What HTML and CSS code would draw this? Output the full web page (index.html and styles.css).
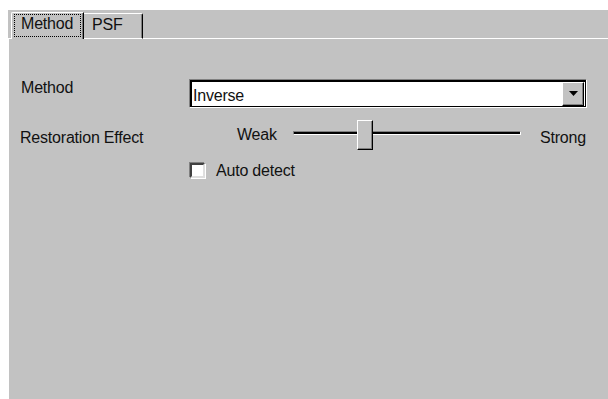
FILE: index.html
```html
<!DOCTYPE html>
<html>
<head>
<meta charset="utf-8">
<link rel="stylesheet" href="styles.css">
</head>
<body>
<div class="window">
  <div class="tabs">
    <div class="tab-lead"></div>
    <div class="tab tab-active"><span class="focus">Method</span></div>
    <div class="tab tab-idle">PSF</div>
    <div class="tab-fill"></div>
  </div>
  <div class="panel">
    <div class="form">
      <div class="label label-method">Method</div>
      <div class="combo">
        <div class="combo-inner">
          <span class="combo-text">Inverse</span>
          <span class="combo-btn">
            <svg width="9" height="5" viewBox="0 0 9 5"><polygon points="0,0 9,0 4.5,5" fill="#000"/></svg>
          </span>
        </div>
      </div>

      <div class="label label-effect">Restoration Effect</div>
      <div class="slider">
        <span class="slider-weak">Weak</span>
        <div class="track">
          <div class="thumb"></div>
        </div>
        <span class="slider-strong">Strong</span>
      </div>

      <div class="spacer"></div>
      <label class="check">
        <span class="check-box"></span>
        <span class="check-text">Auto detect</span>
      </label>
    </div>
  </div>
</div>
</body>
</html>
```

FILE: styles.css
```css
html, body {
  margin: 0;
  padding: 0;
  background: #ffffff;
  overflow: hidden;
}
body {
  font-family: "Liberation Sans", Arial, sans-serif;
  font-size: 16px;
  letter-spacing: -0.2px;
  line-height: 17px;
  color: #111;
}
.window {
  margin: 10px 0 0 8px;
  height: 389px;
  background: #c2c2c2;
  display: flex;
  flex-direction: column;
}
.tabs {
  display: flex;
  align-items: flex-end;
  height: 29px;
}
.tab-lead {
  width: 3px;
  height: 0;
  border-bottom: 1px solid #ffffff;
}
.tab {
  box-sizing: border-box;
}
.tab-active {
  width: 73px;
  height: 27px;
  border-left: 1px solid #ffffff;
  border-top: 1px solid #ffffff;
  border-right: 1px solid #000000;
  box-shadow: inset -1px 0 0 #808080;
  border-top-left-radius: 2px;
  padding: 1px 0 0 2px;
}
.focus {
  display: block;
  box-sizing: border-box;
  width: 67px;
  height: 23px;
  border: 1px dotted #000;
  padding-left: 6px;
}
.tab-idle {
  width: 59px;
  height: 26px;
  border-top: 1px solid #ffffff;
  border-right: 1px solid #000000;
  border-bottom: 1px solid #ffffff;
  box-shadow: inset -1px 0 0 #808080;
  border-top-right-radius: 2px;
  padding: 2px 0 0 8px;
}
.tab-fill {
  flex: 1;
  height: 0;
  border-bottom: 1px solid #ffffff;
}
.panel {
  flex: 1;
  border-left: 1px solid #ffffff;
  padding: 40px 0 0 11px;
}
.form {
  display: grid;
  grid-template-columns: 169px 398px;
  grid-template-rows: 29px 30px 17px;
  row-gap: 12px;
}
.form > .spacer { grid-column: 1; }
.label-method {
  padding-left: 1px;
}
.label-effect {
  padding-top: 9px;
}
.combo {
  box-sizing: border-box;
  height: 29px;
  border: 1px solid;
  border-color: #808080 #ffffff #ffffff #808080;
}
.combo-inner {
  box-sizing: border-box;
  height: 27px;
  border: 1px solid #000;
  border-width: 2px 1px 1px 2px;
  background: #ffffff;
  display: flex;
}
.combo-text {
  flex: 1;
  padding: 5px 0 0 1px;
}
.combo-btn {
  box-sizing: border-box;
  width: 22px;
  height: 24px;
  margin-right: 1px;
  background: #c2c2c2;
  border: 1px solid;
  border-color: #ffffff #000000 #000000 #ffffff;
  box-shadow: inset -1px -1px 0 #808080;
  display: flex;
  align-items: center;
  justify-content: center;
}
.combo-btn svg { display: block; margin-top: -1px; }
.slider {
  display: flex;
  align-items: flex-start;
  height: 30px;
}
.slider-weak {
  box-sizing: border-box;
  width: 104px;
  padding-left: 48px;
  margin-top: 6px;
}
.track {
  position: relative;
  box-sizing: border-box;
  width: 228px;
  height: 4px;
  margin-top: 11px;
  background: #000;
  border-top: 1px solid #808080;
  border-left: 1px solid #808080;
  border-bottom: 1px solid #ffffff;
  border-right: 1px solid #ffffff;
}
.thumb {
  position: absolute;
  left: 63px;
  top: -12px;
  box-sizing: border-box;
  width: 16px;
  height: 30px;
  background: #c2c2c2;
  border: 1px solid;
  border-color: #ffffff #000000 #000000 #ffffff;
  box-shadow: inset -1px -1px 0 #808080;
}
.slider-strong {
  margin-left: 19px;
  margin-top: 9px;
}
.check {
  display: flex;
  align-items: flex-start;
  padding-left: 1px;
}
.check-box {
  box-sizing: border-box;
  width: 15px;
  height: 15px;
  margin-top: 1px;
  background: #ffffff;
  border: 2px solid;
  border-color: #404040 #dfdfdf #dfdfdf #404040;
  box-shadow: -1px -1px 0 #808080, 1px 1px 0 #ffffff;
}
.check-text {
  margin-left: 11px;
}
```
